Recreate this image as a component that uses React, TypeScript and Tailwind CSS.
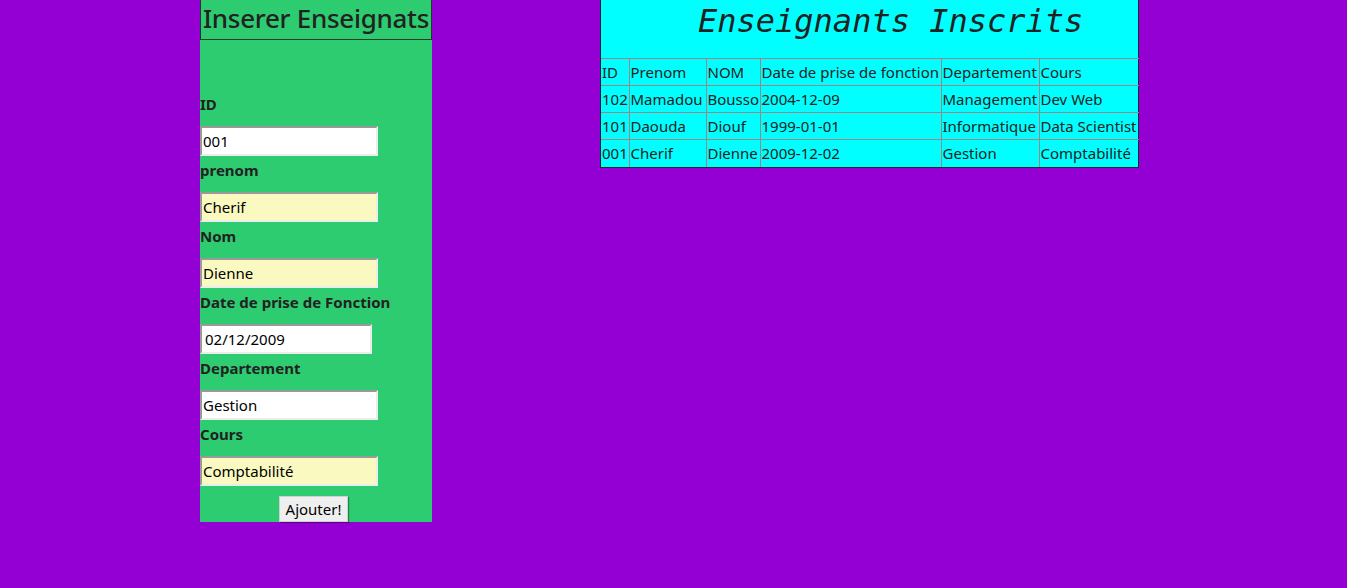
import React from "react";

const fields = [
  { label: "ID", value: "001", yellow: false, w: "w-[178px]", pl: "pl-[1px]" },
  { label: "prenom", value: "Cherif", yellow: true, w: "w-[178px]", pl: "pl-[1px]" },
  { label: "Nom", value: "Dienne", yellow: true, w: "w-[178px]", pl: "pl-[1px]" },
  { label: "Date de prise de Fonction", value: "02/12/2009", yellow: false, w: "w-[172px]", pl: "pl-[3px]" },
  { label: "Departement", value: "Gestion", yellow: false, w: "w-[178px]", pl: "pl-[1px]" },
  { label: "Cours", value: "Comptabilité", yellow: true, w: "w-[178px]", pl: "pl-[1px]" },
];

const rows = [
  ["102", "Mamadou", "Bousso", "2004-12-09", "Management", "Dev Web"],
  ["101", "Daouda", "Diouf", "1999-01-01", "Informatique", "Data Scientist"],
  ["001", "Cherif", "Dienne", "2009-12-02", "Gestion", "Comptabilité"],
];

const headers = ["ID", "Prenom", "NOM", "Date de prise de fonction", "Departement", "Cours"];
const widths = [28, 77, 54, 181, 98, 100];

export default function App() {
  return (
    <div
      className="w-[1347px] h-[588px] bg-[#9400d3] flex items-start text-[#222]"
      style={{ fontFamily: '"Noto Sans", "Open Sans", sans-serif' }}
    >
      <div className="ml-[200px] w-[232px] h-[522px] bg-[#2ecc71] flex flex-col">
        <div className="h-[40px] border border-t-0 border-[#1d3a2a] flex items-center justify-center">
          <span className="text-[26px] leading-[30px] font-medium tracking-[-0.3px] text-[#222] -mt-[4px] whitespace-nowrap">
            Inserer Enseignats
          </span>
        </div>
        <div className="flex flex-col pt-[53px]">
          {fields.map((f, i) => (
            <div key={i} className="flex flex-col">
              <div className={`${i === 0 ? "mt-0" : "mt-[3px]"} h-[22px] leading-[22px] text-[15px] font-bold`}>
                {f.label}
              </div>
              <div
                className={`mt-[11px] h-[30px] ${f.w} ${f.pl} border-2 border-t-[#9a9a9a] border-l-[#9a9a9a] border-b-[#ececec] border-r-[#ececec] flex items-center text-[15px] text-black ${
                  f.yellow ? "bg-[#fafac0]" : "bg-white"
                }`}
              >
                {f.value}
              </div>
            </div>
          ))}
          <div className="flex justify-center mt-[10px] pr-[5px]">
            <button className="h-[26px] w-[69px] bg-[#eef0f0] border border-[#d0d0d0] shadow-[1px_1px_1px_rgba(0,0,0,0.35)] text-[15px] text-black leading-none">
              Ajouter!
            </button>
          </div>
        </div>
      </div>

      <div className="ml-[168px] w-[539px] bg-[#00ffff] border border-t-0 border-[#1c2a2a]">
        <div className="h-[58px] flex items-center pl-[97px]">
          <span
            className="text-[32px] italic leading-none -mt-[16px]"
            style={{ fontFamily: '"DejaVu Sans Mono", "Liberation Mono", monospace' }}
          >
            Enseignants Inscrits
          </span>
        </div>
        <table className="table-fixed border-collapse w-[538px] text-[15px]">
          <colgroup>
            {widths.map((w, i) => (
              <col key={i} style={{ width: w }} />
            ))}
          </colgroup>
          <tbody>
            <tr className="h-[27px]">
              {headers.map((h, i) => (
                <td
                  key={i}
                  className="border border-[#9b8585] first:border-l-0 last:border-r-0 px-[1px] whitespace-nowrap overflow-hidden"
                >
                  {h}
                </td>
              ))}
            </tr>
            {rows.map((r, ri) => (
              <tr key={ri} className="h-[27px]">
                {r.map((c, ci) => (
                  <td
                    key={ci}
                    className={`border border-[#9b8585] first:border-l-0 last:border-r-0 px-[1px] whitespace-nowrap overflow-hidden ${
                      ri === rows.length - 1 ? "border-b-0" : ""
                    }`}
                  >
                    {c}
                  </td>
                ))}
              </tr>
            ))}
          </tbody>
        </table>
      </div>
    </div>
  );
}
